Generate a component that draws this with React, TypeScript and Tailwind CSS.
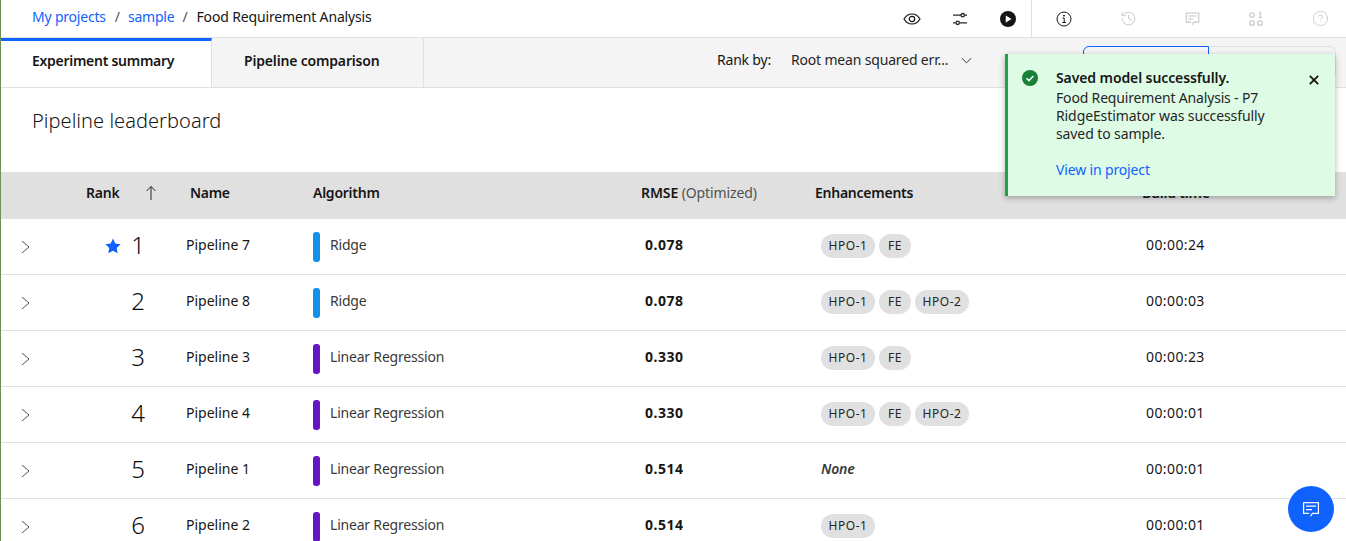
import { History, CircleHelp } from 'lucide-react'

const FONT = "font-['Noto_Sans',sans-serif]"
const GRID = 'grid grid-cols-[185px_127px_327px_175px_327px_1fr]'

const BLUE = 'bg-[#1192e8]'
const PURPLE = 'bg-[#6516c2]'

const ROWS = [
  { rank: 1, name: 'Pipeline 7', algo: 'Ridge', color: BLUE, rmse: '0.078', tags: ['HPO-1', 'FE'], time: '00:00:24', star: true },
  { rank: 2, name: 'Pipeline 8', algo: 'Ridge', color: BLUE, rmse: '0.078', tags: ['HPO-1', 'FE', 'HPO-2'], time: '00:00:03' },
  { rank: 3, name: 'Pipeline 3', algo: 'Linear Regression', color: PURPLE, rmse: '0.330', tags: ['HPO-1', 'FE'], time: '00:00:23' },
  { rank: 4, name: 'Pipeline 4', algo: 'Linear Regression', color: PURPLE, rmse: '0.330', tags: ['HPO-1', 'FE', 'HPO-2'], time: '00:00:01' },
  { rank: 5, name: 'Pipeline 1', algo: 'Linear Regression', color: PURPLE, rmse: '0.514', tags: [], time: '00:00:01' },
  { rank: 6, name: 'Pipeline 2', algo: 'Linear Regression', color: PURPLE, rmse: '0.514', tags: ['HPO-1'], time: '00:00:01' },
]

function ChatIcon({ className }: { className?: string }) {
  return (
    <svg viewBox="0 0 20 20" fill="none" stroke="currentColor" strokeWidth="1.25" className={className}>
      <path d="M2.600 3.500h14.800v10.800h-6l-1.800 3" />
      <path d="M8.200 14.300H2.600V3.500" />
      <path d="M5 7h10M5 10.500h6" />
    </svg>
  )
}

function TopIcons() {
  return (
    <div className="flex items-center h-full">
      <button className="w-12 h-full flex items-center justify-center text-[#161616]">
        <svg viewBox="0 0 20 20" fill="none" stroke="currentColor" strokeWidth="1.2" className="w-5 h-5">
          <path d="M2 10c2-3.400 4.800-5 8-5s6 1.600 8 5c-2 3.400-4.800 5-8 5s-6-1.600-8-5z" />
          <circle cx="10" cy="10" r="2.700" />
        </svg>
      </button>
      <button className="w-12 h-full flex items-center justify-center text-[#262626]">
        <svg viewBox="0 0 20 20" fill="none" stroke="currentColor" strokeWidth="1.3" className="w-5 h-5">
          <path d="M3 6.200h8M14.500 6.200H17M3 13.800h2.500M9.500 13.800H17" />
          <circle cx="12.700" cy="6.200" r="1.700" />
          <circle cx="7.700" cy="13.800" r="1.700" />
        </svg>
      </button>
      <button className="w-12 h-full flex items-center justify-center">
        <svg viewBox="0 0 18 18" className="w-4 h-4">
          <circle cx="9" cy="9" r="9" fill="#161616" />
          <path d="M6.500 5l6.500 4-6.500 4z" fill="#fff" />
        </svg>
      </button>
      <div className="ml-[-1px] w-px h-full bg-[#e0e0e0]" />
      <button className="w-12 h-full mx-2 flex items-center justify-center text-[#161616]">
        <svg viewBox="0 0 16 16" fill="none" stroke="currentColor" strokeWidth="1" className="w-4 h-4">
          <circle cx="8" cy="8" r="7" />
          <path d="M6.500 7h1.700v4.300M6.300 11.500h3.600" />
          <circle cx="8" cy="4.700" r="0.900" fill="currentColor" stroke="none" />
        </svg>
      </button>
      <button className="w-16 h-full flex items-center justify-center text-[#c6c6c6]">
        <History strokeWidth={1.3} className="w-[17px] h-[17px]" />
      </button>
      <button className="w-16 h-full flex items-center justify-center text-[#c6c6c6]">
        <ChatIcon className="w-[17px] h-[17px]" />
      </button>
      <button className="w-16 h-full flex items-center justify-center text-[#c6c6c6]">
        <svg viewBox="0 0 16 16" fill="none" stroke="currentColor" strokeWidth="1.1" className="w-4 h-4">
          <circle cx="4" cy="4" r="2.300" />
          <circle cx="4" cy="12" r="2.300" />
          <circle cx="12" cy="12" r="2.300" />
          <path d="M11 2.200l1.300-.7v5M10.500 6.500h3.500" />
        </svg>
      </button>
      <button className="w-[58px] pl-[6px] h-full flex items-center justify-center text-[#c6c6c6]">
        <CircleHelp strokeWidth={1.2} className="w-[17px] h-[17px]" />
      </button>
    </div>
  )
}

function Toast() {
  return (
    <div className="absolute left-[1004px] top-[54px] w-[330px] h-[142px] bg-[#defbe6] border-l-[3px] border-[#24a148] shadow-[0_2px_6px_rgba(0,0,0,0.3)] flex pt-4 text-sm text-[#161616]">
      <svg viewBox="0 0 16 16" className="w-4 h-4 ml-[14px]">
        <circle cx="8" cy="8" r="8" fill="#198038" />
        <path d="M4.500 8.200l2.400 2.400 4.500-4.600" fill="none" stroke="#fff" strokeWidth="1.500" />
      </svg>
      <div className="ml-[18px] w-[240px]">
        <p className="font-semibold leading-4 tracking-[-0.1px]">Saved model successfully.</p>
        <p className="mt-[3px] leading-[18px] tracking-[-0.1px] text-[#262626]">
          <span className="tracking-[-0.17px]">Food Requirement Analysis - P7</span>
          <br />
          RidgeEstimator was successfully
          <br />
          saved to sample.
        </p>
        <a className="block mt-[18px] leading-[18px] tracking-[-0.15px] text-[#0f62fe]">View in project</a>
      </div>
      <svg viewBox="0 0 12 12" fill="none" stroke="#161616" strokeWidth="2.2" className="w-[10px] h-[10px] ml-[13px] mt-[5px]">
        <path d="M1 1l10 10M11 1L1 11" />
      </svg>
    </div>
  )
}

export default function App() {
  return (
    <div className={`relative w-[1346px] h-[541px] overflow-hidden bg-white border-l border-[#6f8f55] text-[#161616] ${FONT}`}>
      {/* Breadcrumb bar */}
      <div className="h-[38px] flex items-center justify-between border-b border-[#e0e0e0]">
        <div className="flex items-center pl-[31px] text-sm pb-[3px] tracking-[-0.2px]">
          <a className="text-[#0f62fe]">My projects</a>
          <span className="ml-[9px] mr-2 text-[#525252]">/</span>
          <a className="text-[#0f62fe]">sample</a>
          <span className="ml-2 mr-[9px] text-[#525252]">/</span>
          <span className="tracking-[-0.15px]">Food Requirement Analysis</span>
        </div>
        <TopIcons />
      </div>

      {/* Tabs */}
      <div className="h-[50px] flex bg-[#f4f4f4] border-b border-[#e0e0e0]">
        <div className="w-[211px] h-full bg-white border-t-[3px] border-[#0f62fe] border-r border-r-[#e0e0e0] pl-[31px] pt-[10px] text-sm font-semibold tracking-[-0.28px]">
          Experiment summary
        </div>
        <div className="w-[212px] h-full border-r border-[#e0e0e0] pl-[32px] pt-[13px] text-sm font-semibold tracking-[-0.17px]">
          Pipeline comparison
        </div>
        <div className="flex-1 flex items-start text-sm">
          <span className="ml-[293px] mt-[12px] tracking-[-0.2px]">Rank by:</span>
          <span className="ml-5 mt-[12px] w-[159px] text-[#262626] tracking-[-0.17px]">Root mean squared err...</span>
          <svg viewBox="0 0 12 8" fill="none" stroke="#262626" strokeWidth="1" className="w-[11px] h-[8px] mt-[19px] ml-[11px]">
            <path d="M1 1l5 5 5-5" />
          </svg>
          <div className="ml-[111px] mt-[8px] flex h-8">
            <div className="w-[126px] border border-[#0f62fe] rounded-l-md" />
            <div className="w-[127px] border border-l-0 border-[#e0e0e0] rounded-r-md" />
          </div>
        </div>
      </div>

      <h1 className="pl-[31px] pt-[19px] h-[84px] text-xl font-light tracking-[0.05px]">Pipeline leaderboard</h1>

      {/* Table */}
      <div className={`${GRID} h-[47px] items-center bg-[#e0e0e0] text-sm font-semibold pb-[5px] tracking-[-0.2px]`}>
        <div className="flex items-center pl-[85px]">
          <span>Rank</span>
          <svg viewBox="0 0 12 16" fill="none" stroke="#262626" strokeWidth="1" className="w-[12px] h-4 ml-[25px]">
            <path d="M6 15V1.500M1.500 6L6 1.500 10.500 6" />
          </svg>
        </div>
        <div className="pl-1 tracking-[-0.3px]">Name</div>
        <div className="tracking-[-0.25px]">Algorithm</div>
        <div className="pl-px tracking-[-0.1px]">
          RMSE <span className="font-normal text-[#525252]">(Optimized)</span>
        </div>
        <div className="tracking-[-0.25px]">Enhancements</div>
        <div>Build time</div>
      </div>

      {ROWS.map((row) => (
        <div key={row.rank} className={`${GRID} h-[56px] items-center border-b border-[#e0e0e0] text-sm`}>
          <div className="flex items-center relative h-full">
            <svg viewBox="0 0 9 14" fill="none" stroke="#525252" strokeWidth="1" className="w-[9px] h-[14px] ml-[20px] mt-[1px]">
              <path d="M1 1l7 6-7 6" />
            </svg>
            {row.star && (
              <svg viewBox="0 0 16 16" className="w-4 h-4 absolute left-[104px] top-[19px]">
                <path d="M8 .6l2.300 4.900 5.300.7-3.900 3.700 1 5.300L8 12.700l-4.700 2.500 1-5.300L.4 6.200l5.300-.7z" fill="#0f62fe" />
              </svg>
            )}
            <span className="absolute right-[41px] top-[10px] text-2xl font-light text-[#0c0c0c]">{row.rank}</span>
          </div>
          <div className="pb-[3px]">{row.name}</div>
          <div className="flex items-center">
            <div className={`w-[7px] h-[30px] rounded-[3px] ${row.color}`} />
            <span className="ml-[10px] pb-[3px] text-[#393939] tracking-[-0.2px]">{row.algo}</span>
          </div>
          <div className="pl-[5px] pb-[3px] font-bold tracking-[0.5px]">{row.rmse}</div>
          <div className="pl-[6px] flex gap-1 items-center">
            {row.tags.length === 0 && (
              <span className="pb-[3px] italic font-semibold text-[#393939] tracking-[-0.2px]">None</span>
            )}
            {row.tags.map((tag) => (
              <span
                key={tag}
                className={`h-6 rounded-full bg-[#e0e0e0] flex items-center justify-center text-xs text-[#262626] tracking-[0.5px] mt-[-1px] ${tag === 'FE' ? 'w-8' : 'w-[54px]'}`}
              >
                {tag}
              </span>
            ))}
          </div>
          <div className="pl-1 pb-[3px] tracking-[0.4px]">{row.time}</div>
        </div>
      ))}

      <Toast />

      <button className="absolute left-[1287px] top-[486px] w-[46px] h-[46px] rounded-full bg-[#0f62fe] flex items-center justify-center text-white">
        <ChatIcon className="w-5 h-5" />
      </button>
    </div>
  )
}
